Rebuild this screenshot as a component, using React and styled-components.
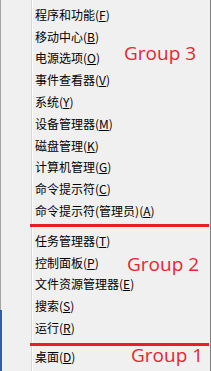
import React from "react";
import styled, { createGlobalStyle } from "styled-components";

const Global = createGlobalStyle`
  html, body { margin: 0; padding: 0; background: #f0f0f0; }
  body { font-family: "Noto Sans CJK SC", "Liberation Sans", sans-serif; }
`;

const Frame = styled.div`
  width: 211px;
  height: 371px;
  display: flex;
  background: #f0f0f0;
  overflow: hidden;
`;

const Edge = styled.div`
  width: 2px;
  flex: none;
  background:
    linear-gradient(to bottom, transparent 310px, #2d5eae 310px),
    linear-gradient(to right, #a3a3a3 1px, #f0f0f0 1px);
`;

const Menu = styled.div`
  flex: 1;
  display: flex;
  flex-direction: column;
  padding-top: 4px;
  border-right: 1px solid #808080;
  background: linear-gradient(
    to right,
    transparent 29px,
    #d8d8d8 29px,
    #d8d8d8 30px,
    #ffffff 30px,
    #ffffff 31px,
    transparent 31px
  );
`;

const Group = styled.div`
  position: relative;
  display: flex;
  flex-direction: column;
`;

const Row = styled.div`
  height: 21.8px;
  display: flex;
  align-items: center;
  padding-left: 33px;
  font-size: 12px;
  line-height: 1;
  color: #000;
  white-space: nowrap;
`;

const Key = styled.span`
  text-decoration: underline;
  text-underline-offset: 1px;
`;

const Separator = styled.div`
  height: 3px;
  margin: ${p => p.$top}px 1px ${p => p.$bottom}px 28px;
  background: #ec1c24;
`;

const Note = styled.span`
  position: absolute;
  top: ${p => p.$top}px;
  left: ${p => p.$left}px;
  font-family: "Open Sans", "DejaVu Sans", sans-serif;
  font-size: 19px;
  line-height: 19px;
  color: #ee2233;
  white-space: nowrap;
`;

const groups = [
  {
    label: "Group 3",
    note: { top: 40, left: 122 },
    items: [
      ["程序和功能", "F"],
      ["移动中心", "B"],
      ["电源选项", "O"],
      ["事件查看器", "V"],
      ["系统", "Y"],
      ["设备管理器", "M"],
      ["磁盘管理", "K"],
      ["计算机管理", "G"],
      ["命令提示符", "C"],
      ["命令提示符(管理员)", "A"],
    ],
    sep: { top: 2, bottom: 3 },
  },
  {
    label: "Group 2",
    note: { top: 25, left: 125 },
    items: [
      ["任务管理器", "T"],
      ["控制面板", "P"],
      ["文件资源管理器", "E"],
      ["搜索", "S"],
      ["运行", "R"],
    ],
    sep: { top: 4, bottom: 0 },
  },
  {
    label: "Group 1",
    note: { top: 0, left: 129 },
    items: [["桌面", "D"]],
  },
];

export default function App() {
  return (
    <>
      <Global />
      <Frame>
        <Edge />
        <Menu>
          {groups.map(g => (
            <React.Fragment key={g.label}>
              <Group>
                {g.items.map(([text, key]) => (
                  <Row key={text}>
                    {text}(<Key>{key}</Key>)
                  </Row>
                ))}
                <Note $top={g.note.top} $left={g.note.left}>{g.label}</Note>
              </Group>
              {g.sep && <Separator $top={g.sep.top} $bottom={g.sep.bottom} />}
            </React.Fragment>
          ))}
        </Menu>
      </Frame>
    </>
  );
}
